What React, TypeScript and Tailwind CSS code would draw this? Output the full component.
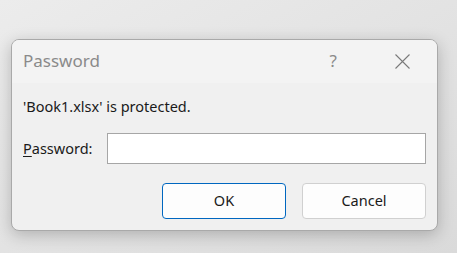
import React, { useState } from 'react';

function PasswordDialog() {
  const [password, setPassword] = useState('');

  return (
    <div className="w-[427px] h-[192px] rounded-[8px] border border-[#a9a9a9] bg-[#f0f0f0] shadow-[0_4px_16px_rgba(0,0,0,0.22)] overflow-hidden flex flex-col">
      {/* barre de titre */}
      <div className="h-[43px] bg-[#f3f3f3] flex items-center pl-[11px] pr-[27px]">
        <span className="text-[17px] text-[#8a8a8a] flex-1 -mt-[1px]">Password</span>
        <span className="text-[17px] text-[#8a8a8a] mr-[58px] -mt-[1px]">?</span>
        <svg width="15" height="15" viewBox="0 0 15 15">
          <path d="M0.5 0.5 L14.5 14.5 M14.5 0.5 L0.5 14.5" stroke="#7a7a7a" strokeWidth="1.1" fill="none" />
        </svg>
      </div>

      {/* contenu */}
      <div className="flex-1 pl-[11px] pr-[11px] pt-[13px]">
        <p className="text-[14.5px] leading-[20px] text-[#1a1a1a]">'Book1.xlsx' is protected.</p>
        <div className="flex items-center mt-[17px]">
          <label className="text-[14.5px] text-[#1a1a1a] w-[84px]">
            <span className="underline underline-offset-2">P</span>assword:
          </label>
          <input
            type="password"
            value={password}
            onChange={(e) => setPassword(e.target.value)}
            className="w-[320px] h-[31px] bg-white border border-[#a6a6a6] outline-none px-2 text-[15px]"
          />
        </div>
        <div className="flex justify-end gap-[16px] mt-[19px]">
          <button className="w-[124px] h-[36px] rounded-[4px] border-[1.5px] border-[#0067c0] bg-[#fdfdfd] text-[14.5px] text-[#1a1a1a]">
            OK
          </button>
          <button className="w-[124px] h-[36px] rounded-[4px] border border-[#d0d0d0] bg-[#fdfdfd] text-[14.5px] text-[#1a1a1a]">
            Cancel
          </button>
        </div>
      </div>
    </div>
  );
}

export default function App() {
  return (
    <div
      className="w-[457px] h-[253px] bg-gradient-to-br from-[#ececec] to-[#dadada] pl-[11px] pt-[39px]"
      style={{ fontFamily: '"Noto Sans", "Open Sans", sans-serif' }}
    >
      <PasswordDialog />
    </div>
  );
}
